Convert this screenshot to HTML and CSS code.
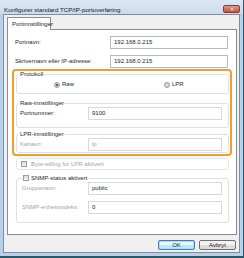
FILE: index.html
```html
<!doctype html>
<html>

<head>
    <title>TCP/IP-port</title>
    <meta charset="UTF-8">
    <link rel="stylesheet" href="styles.css">
</head>

<body>
    <div class="window">
        <div class="titlebar">
            <span class="title">Konfigurer standard TCP/IP-portoverføring</span>
            <span class="close">&#x2715;</span>
        </div>
        <div class="client">
            <div class="tabs"><span class="tab">Portinnstillinger</span></div>
            <div class="panel">
                <div class="row">
                    <span class="label">Portnavn:</span>
                    <span class="input wide">192.168.0.215</span>
                </div>
                <div class="row second">
                    <span class="label">Skrivernavn eller IP-adresse:</span>
                    <span class="input wide">192.168.0.215</span>
                </div>

                <!-- markert område -->
                <div class="highlight">
                    <fieldset class="proto">
                        <legend>Protokoll</legend>
                        <div class="radios">
                            <span class="opt first"><span class="radio on"></span>Raw</span>
                            <span class="opt"><span class="radio"></span>LPR</span>
                        </div>
                    </fieldset>
                    <fieldset class="raw">
                        <legend>Raw-innstillinger</legend>
                        <div class="frow">
                            <span class="flabel">Portnummer:</span>
                            <span class="input narrow">9100</span>
                        </div>
                    </fieldset>
                    <fieldset class="lpr">
                        <legend>LPR-innstillinger</legend>
                        <div class="frow">
                            <span class="flabel off">Kønavn:</span>
                            <span class="input narrow off">lp</span>
                        </div>
                    </fieldset>
                </div>

                <div class="bytebox">
                    <span class="check"></span><span class="off">Byte-telling for LPR aktivert</span>
                </div>

                <fieldset class="snmp">
                    <legend><span class="check"></span>SNMP-status aktivert</legend>
                    <div class="frow">
                        <span class="flabel off">Gruppenavn:</span>
                        <span class="input narrow">public</span>
                    </div>
                    <div class="frow next">
                        <span class="flabel off">SNMP-enhetsindeks:</span>
                        <span class="input narrow">0</span>
                    </div>
                </fieldset>
            </div>
            <div class="buttons">
                <span class="btn default">OK</span>
                <span class="btn">Avbryt</span>
            </div>
        </div>
    </div>
</body>

</html>
```

FILE: styles.css
```css
* {
    box-sizing: border-box;
}

body {
    margin: 0;
    background-color: #2c5a6a;
    font-family: "Liberation Sans", Arial, sans-serif;
    font-size: 6px;
    line-height: 7px;
    color: #1e1e1e;
}

.window {
    width: 243px;
    height: 256px;
    background-color: #b8d0ea;
    padding: 0 3px 3px 3px;
    display: flex;
    flex-direction: column;
}

.titlebar {
    height: 14px;
    margin: 0 -3px;
    padding: 4px 3px 0 4px;
    display: flex;
    align-items: center;
    justify-content: space-between;
    background: linear-gradient(#dce7f4, #cbdaec);
}

.title {
    font-size: 6.2px;
    color: #1a1a1a;
}

.close {
    width: 17px;
    height: 8px;
    border: 1px solid #8d3a32;
    border-radius: 2px;
    background: linear-gradient(#e0998e, #c4503f);
    color: #fff;
    font-size: 5px;
    line-height: 6px;
    text-align: center;
}

.client {
    flex: 1;
    background-color: #f0f0f0;
    border: 1px solid #7f8d9c;
    padding: 2px 2px 0 3px;
    display: flex;
    flex-direction: column;
}

.tabs {
    display: flex;
    height: 12px;
}

.tab {
    width: 44px;
    height: 13px;
    background-color: #fff;
    border: 1px solid #898c95;
    border-bottom: none;
    padding: 3px 0 0 4px;
    position: relative;
    z-index: 1;
}

.panel {
    height: 206px;
    background-color: #fff;
    border: 1px solid #898c95;
    padding: 6px 7px 0 8px;
}

.row {
    display: flex;
    align-items: center;
    margin-left: -1px;
}

.row.second {
    margin-top: 6px;
}

.label {
    width: 95px;
}

.input {
    height: 13px;
    border: 1px solid #c8ccd0;
    background-color: #fff;
    padding: 2px 0 0 3px;
}

.wide {
    width: 118px;
    border-color: #b5b9bd;
}

.narrow {
    width: 134px;
    border-color: #d6d8da;
}

.off {
    color: #a3a3a3;
}

.highlight {
    margin: 1px -3px 0 -4px;
    padding: 0 1px 0 2px;
    border: 2px solid #f39c2f;
    border-radius: 4px;
    height: 87px;
}

fieldset {
    margin: 0;
    border: 1px solid #dde1e4;
    border-radius: 3px;
    padding: 0 6px 0 3px;
}

legend {
    padding: 0 1px;
    margin-left: -1px;
    line-height: 6px;
}

.proto {
    height: 23px;
}

.radios {
    display: flex;
    align-items: center;
    padding: 4px 0 0 34px;
}

.opt {
    display: flex;
    align-items: center;
    gap: 2px;
}

.opt.first {
    width: 110px;
}

.radio {
    width: 6px;
    height: 6px;
    border-radius: 50%;
    border: 1px solid #9a9a9a;
    background: radial-gradient(circle, #e8e8e8, #c4c4c4);
    display: flex;
    align-items: center;
    justify-content: center;
}

.radio.on::after {
    content: "";
    width: 2px;
    height: 2px;
    border-radius: 50%;
    background-color: #2a3a4a;
}

.raw {
    margin-top: 6px;
    height: 28px;
}

.lpr {
    margin-top: 3px;
    height: 22px;
}

.frow {
    display: flex;
    align-items: center;
    padding-top: 1px;
}

.flabel {
    width: 68px;
}

.bytebox {
    margin-top: 2px;
    height: 12px;
    border: 1px solid #e4e6e8;
    border-radius: 3px;
    display: flex;
    align-items: center;
    gap: 2px;
    padding-left: 4px;
}

.check {
    width: 6px;
    height: 6px;
    border: 1px solid #9c9c9c;
    background: linear-gradient(#dcdcdc, #f4f4f4);
    display: inline-block;
    margin-right: 2px;
    vertical-align: -1px;
}

.snmp {
    margin-top: 5px;
    height: 48px;
    padding-left: 5px;
}

.snmp legend {
    margin-left: 0;
}

.frow.next {
    margin-top: 5px;
}

.snmp .flabel {
    width: 66px;
}

.buttons {
    display: flex;
    justify-content: flex-end;
    gap: 4px;
    margin-top: 5px;
    padding-right: 1px;
}

.btn {
    width: 37px;
    height: 10px;
    border: 1px solid #707070;
    border-radius: 2px;
    background: linear-gradient(#f2f2f2 50%, #dcdcdc 50%);
    text-align: center;
    line-height: 8px;
}

.btn.default {
    border-color: #3c7fb1;
    background: linear-gradient(#eaf6fd 50%, #bee6fd 50%);
    box-shadow: inset 0 0 0 1px #a7dcf5;
}
```
